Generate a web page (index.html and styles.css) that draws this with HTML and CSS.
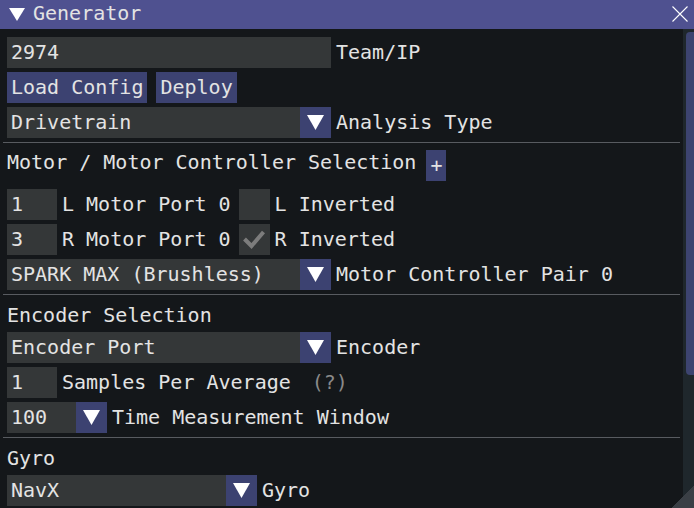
FILE: index.html
```html
<!DOCTYPE html>
<html>
<head>
<meta charset="utf-8">
<link rel="stylesheet" href="styles.css">
</head>
<body>
<div class="window">
  <div class="titlebar">
    <svg class="collapse" width="16" height="13" viewBox="0 0 16 13"><polygon points="0,0 16,0 8,13" fill="#ffffff"/></svg>
    <span class="title">Generator</span>
    <svg class="close" width="16" height="16" viewBox="0 0 16 16"><path d="M0.5 0.5L15.5 15.5M15.5 0.5L0.5 15.5" stroke="#ffffff" stroke-width="1.1" fill="none"/></svg>
  </div>
  <div class="body">
    <div class="content">
      <div class="row">
        <div class="frame w324">2974</div>
        <span class="label">Team/IP</span>
      </div>
      <div class="row buttons">
        <div class="btn">Load Config</div>
        <div class="btn">Deploy</div>
      </div>
      <div class="row">
        <div class="combo w324"><span class="combo-text">Drivetrain</span><span class="arrow"><svg width="17" height="15" viewBox="0 0 17 15"><polygon points="0,0 17,0 8.5,15" fill="#ffffff"/></svg></span></div>
        <span class="label">Analysis Type</span>
      </div>
      <div class="sep"></div>
      <div class="header motor">
        <span class="header-text">Motor / Motor Controller Selection</span>
        <div class="btn plus">+</div>
      </div>
      <div class="row">
        <div class="frame w50">1</div>
        <span class="label">L Motor Port 0</span>
        <div class="check"></div>
        <span class="label">L Inverted</span>
      </div>
      <div class="row">
        <div class="frame w50">3</div>
        <span class="label">R Motor Port 0</span>
        <div class="check"><svg width="31" height="31" viewBox="0 0 31 31"><polyline points="5.5,15 12.5,22 24.5,8" fill="none" stroke="#7c7c7c" stroke-width="4"/></svg></div>
        <span class="label">R Inverted</span>
      </div>
      <div class="row">
        <div class="combo w324"><span class="combo-text">SPARK MAX (Brushless)</span><span class="arrow"><svg width="17" height="15" viewBox="0 0 17 15"><polygon points="0,0 17,0 8.5,15" fill="#ffffff"/></svg></span></div>
        <span class="label">Motor Controller Pair 0</span>
      </div>
      <div class="sep"></div>
      <div class="header">Encoder Selection</div>
      <div class="row">
        <div class="combo w324"><span class="combo-text">Encoder Port</span><span class="arrow"><svg width="17" height="15" viewBox="0 0 17 15"><polygon points="0,0 17,0 8.5,15" fill="#ffffff"/></svg></span></div>
        <span class="label">Encoder</span>
      </div>
      <div class="row">
        <div class="frame w50">1</div>
        <span class="label">Samples Per Average</span>
        <span class="help">(?)</span>
      </div>
      <div class="row">
        <div class="combo w100"><span class="combo-text">100</span><span class="arrow"><svg width="17" height="15" viewBox="0 0 17 15"><polygon points="0,0 17,0 8.5,15" fill="#ffffff"/></svg></span></div>
        <span class="label">Time Measurement Window</span>
      </div>
      <div class="sep"></div>
      <div class="header">Gyro</div>
      <div class="row">
        <div class="combo w250"><span class="combo-text">NavX</span><span class="arrow"><svg width="17" height="15" viewBox="0 0 17 15"><polygon points="0,0 17,0 8.5,15" fill="#ffffff"/></svg></span></div>
        <span class="label">Gyro</span>
      </div>
    </div>
    <div class="scrollbar"><div class="grab"></div></div>
  </div>
  <div class="grip"></div>
</div>
</body>
</html>
```

FILE: styles.css
```css
* { box-sizing: border-box; }
html, body {
  margin: 0;
  padding: 0;
  background: #14171a;
}
body {
  font-family: "DejaVu Sans Mono", "Liberation Mono", monospace;
  font-size: 20px;
  color: #e3e3e3;
}
.window {
  position: relative;
  width: 694px;
  height: 508px;
  display: flex;
  flex-direction: column;
  overflow: hidden;
  background: #14171a;
}
.titlebar {
  height: 29px;
  flex: 0 0 29px;
  background: #4f5190;
  display: flex;
  align-items: center;
  padding: 0 6px 2px 9px;
}
.collapse { flex: 0 0 auto; margin-top: 2px; }
.title {
  margin-left: 8px;
  line-height: 23px;
  flex: 1;
  white-space: pre;
}
.close { flex: 0 0 auto; margin-top: 1px; }
.body {
  flex: 1;
  display: flex;
  min-height: 0;
}
.content {
  flex: 1;
  display: flex;
  flex-direction: column;
  gap: 4px;
  padding: 8px 0 0 7px;
  overflow: hidden;
}
.row {
  display: flex;
  align-items: center;
  gap: 5px;
  height: 31px;
  flex: 0 0 31px;
}
.row.buttons { gap: 9px; }
.frame {
  height: 31px;
  line-height: 31px;
  background: #343738;
  padding-left: 4px;
  white-space: pre;
  flex: 0 0 auto;
}
.w324 { width: 324px; }
.w50 { width: 50px; }
.w100 { width: 100px; }
.w250 { width: 250px; }
.label {
  white-space: pre;
  line-height: 31px;
}
.help {
  color: #8a8a8a;
  margin-left: 16px;
  white-space: pre;
  line-height: 31px;
}
.btn {
  height: 31px;
  line-height: 31px;
  background: #3c4271;
  padding: 0 4px;
  white-space: pre;
  flex: 0 0 auto;
}
.combo {
  height: 31px;
  display: flex;
  background: #343738;
  flex: 0 0 auto;
}
.combo-text {
  flex: 1;
  padding-left: 4px;
  line-height: 31px;
  white-space: pre;
  overflow: hidden;
}
.arrow {
  width: 31px;
  height: 31px;
  flex: 0 0 31px;
  background: #3c4271;
  display: flex;
  align-items: center;
  justify-content: center;
}
.check {
  width: 31px;
  height: 31px;
  flex: 0 0 31px;
  background: #343738;
  margin-left: 3px;
}
.check svg { display: block; }
.sep {
  height: 1px;
  flex: 0 0 1px;
  background: #585b60;
  margin: 0 3px 3px -4px;
}
.header {
  height: 26px;
  flex: 0 0 26px;
  line-height: 26px;
  white-space: pre;
}
.header.motor {
  display: flex;
  align-items: flex-start;
  height: 31px;
  flex: 0 0 31px;
  margin-bottom: 4px;
}
.header-text {
  line-height: 24px;
  white-space: pre;
}
.btn.plus { margin-left: 10px; }
.scrollbar {
  width: 11px;
  flex: 0 0 11px;
  background: #1f272c;
  padding: 3px 0 0 3px;
}
.grab {
  height: 343px;
  background: #3d4470;
  border-radius: 4px 0 0 4px;
}
.grip {
  position: absolute;
  right: 0;
  bottom: 0;
  width: 22px;
  height: 22px;
  background: linear-gradient(to bottom right, transparent 50%, #3a3f45 50%);
}
```
